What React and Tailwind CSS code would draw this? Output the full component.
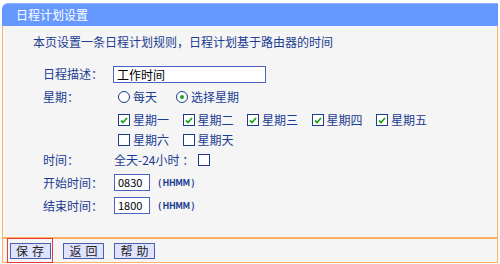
const font = { fontFamily: '"Noto Sans CJK SC", "Noto Sans", sans-serif' }

const Check = ({ checked }) => (
  <span className="w-[12px] h-[12px] border border-[#1c3c8c] bg-white flex items-center justify-center shrink-0">
    {checked && (
      <svg width="8" height="7" viewBox="0 0 8 7">
        <path d="M1 3.5 L3 5.5 L7 1" stroke="#21a121" strokeWidth="1.8" fill="none" />
      </svg>
    )}
  </span>
)

const Radio = ({ checked }) => (
  <span className="w-[12px] h-[12px] rounded-full border border-[#1c3c8c] bg-white flex items-center justify-center shrink-0">
    {checked && <span className="w-[4px] h-[4px] rounded-full bg-[#21a121]" />}
  </span>
)

const Day = ({ label, checked }) => (
  <div className="w-[64.5px] flex items-center gap-[3px] whitespace-nowrap">
    <Check checked={checked} />
    <span>{label}</span>
  </div>
)

const Btn = ({ children }) => (
  <button className="h-[16px] w-[41px] border border-[#4a5fb0] bg-[#dfe3ff] text-[12px] leading-none text-[#222] tracking-[4px] pl-[4px]">
    {children}
  </button>
)

const App = () => {
  return (
    <div className="w-[500px] h-[264px] bg-white pt-[3px] px-[2px] text-[12px] text-[#1b3c92]" style={font}>
      <div className="h-[23px] bg-[#6699ff] rounded-tl-[6px] border-t border-[#8fb3ff] text-white pl-[14px] flex items-center text-[12px]">
        日程计划设置
      </div>
      <div className="h-[211px] bg-[#f5f5f5] border-x border-[#ffb060]">
        <div className="pl-[30px] pt-[8px] h-[32px] leading-[16px]">
          本页设置一条日程计划规则，日程计划基于路由器的时间
        </div>
        <div className="pl-[40px]">
          <div className="flex items-center h-[22px] mt-[5px]">
            <span className="w-[70px]">日程描述：</span>
            <div className="w-[153px] h-[17px] border border-[#4a63c0] bg-white text-black pl-[3px] leading-[15px]">
              工作时间
            </div>
          </div>
          <div className="flex items-center h-[22px] mt-[1px]">
            <span className="w-[75px]">星期：</span>
            <div className="flex items-center gap-[3px] w-[58px]">
              <Radio />
              <span>每天</span>
            </div>
            <div className="flex items-center gap-[3px]">
              <Radio checked />
              <span>选择星期</span>
            </div>
          </div>
          <div className="pl-[75px] mt-[1px]">
            <div className="flex items-center h-[22px]">
              <Day label="星期一" checked />
              <Day label="星期二" checked />
              <Day label="星期三" checked />
              <Day label="星期四" checked />
              <Day label="星期五" checked />
            </div>
            <div className="flex items-center h-[18px]">
              <Day label="星期六" />
              <Day label="星期天" />
            </div>
          </div>
          <div className="flex items-center h-[20px] mt-[1px]">
            <span className="w-[71px]">时间：</span>
            <span className="w-[84px] whitespace-nowrap shrink-0">全天-24小时 ：</span>
            <Check />
          </div>
          <div className="flex items-center h-[23px] mt-[1px]">
            <span className="w-[71px]">开始时间：</span>
            <div className="w-[36px] h-[17px] border border-[#4a63c0] bg-white text-black pl-[3px] leading-[15px] text-[11px]">
              0830
            </div>
            <span className="ml-[8px] text-[9px] font-bold tracking-tighter">( HHMM )</span>
          </div>
          <div className="flex items-center h-[23px]">
            <span className="w-[71px]">结束时间：</span>
            <div className="w-[36px] h-[17px] border border-[#4a63c0] bg-white text-black pl-[3px] leading-[15px] text-[11px]">
              1800
            </div>
            <span className="ml-[8px] text-[9px] font-bold tracking-tighter">( HHMM )</span>
          </div>
        </div>
      </div>
      <div className="h-[26px] bg-[#f5f5f5] border-x border-b border-t-2 border-[#ffb060] flex items-center pl-[4px] gap-[10px]">
        <div className="h-[25px] w-[46px] border border-[#e83a3a] flex items-center justify-center">
          <Btn>保存</Btn>
        </div>
        <Btn>返回</Btn>
        <Btn>帮助</Btn>
      </div>
    </div>
  )
}

export default App
